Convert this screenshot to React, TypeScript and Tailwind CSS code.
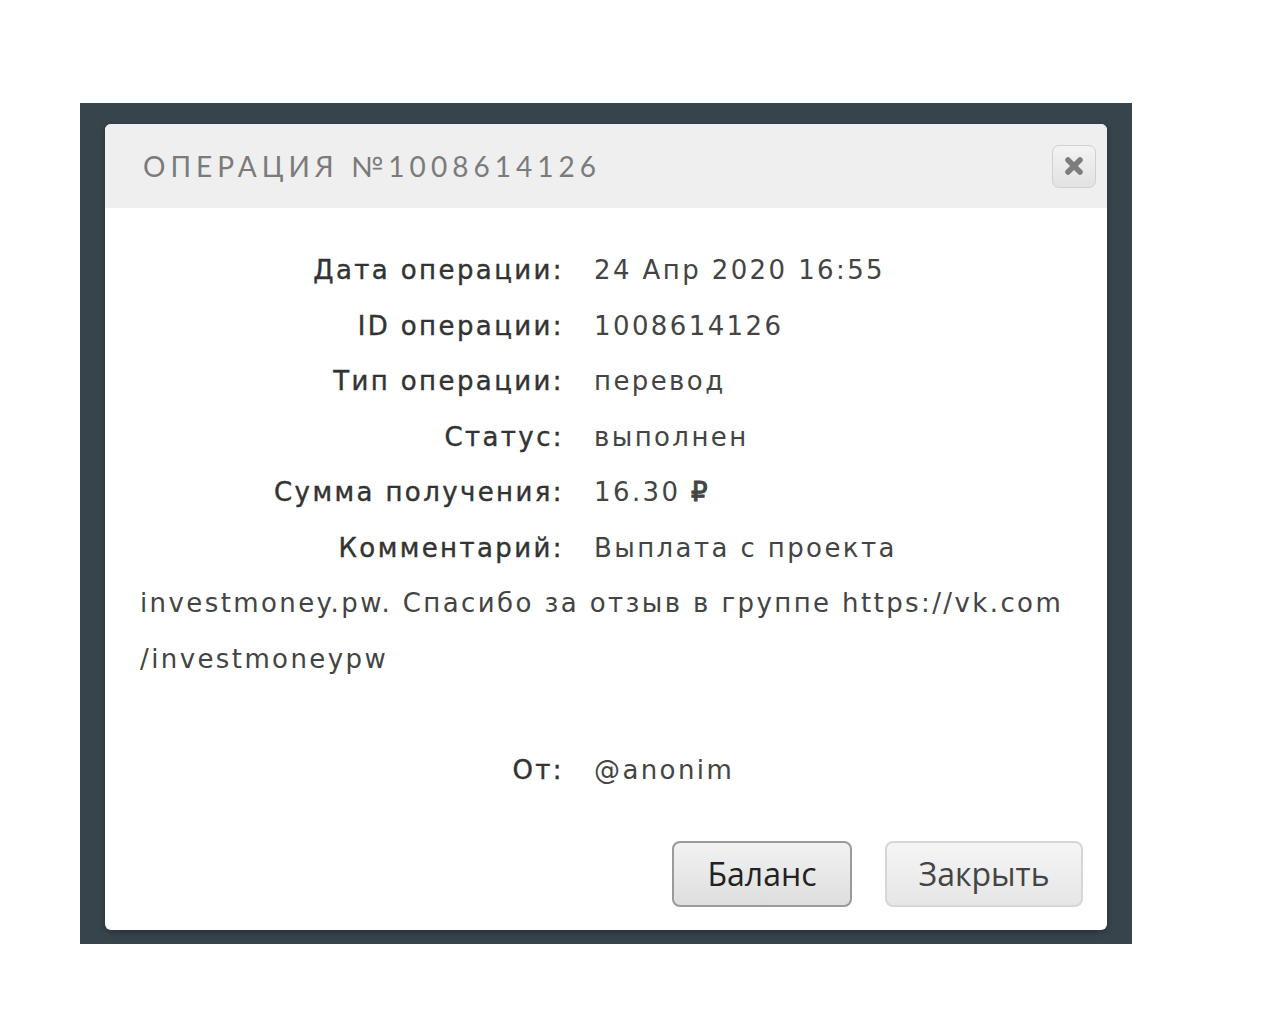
import React from "react";

const rows: [string, React.ReactNode][] = [
  ["Дата операции:", "24 Апр 2020 16:55"],
  ["ID операции:", "1008614126"],
  ["Тип операции:", "перевод"],
  ["Статус:", "выполнен"],
  ["Сумма получения:", <span>16.30 <span className="[-webkit-text-stroke:1px_#444]">₽</span></span>],
  ["Комментарий:", "Выплата с проекта"],
];

function Row({ label, value }: { label: string; value: React.ReactNode }) {
  return (
    <div className="flex h-[55.5px] items-center">
      <div className="w-[424px] shrink-0 text-right text-[#333] [-webkit-text-stroke:0.4px_#333]">{label}</div>
      <div className="pl-[30px] text-[#444]">{value}</div>
    </div>
  );
}

export default function App() {
  return (
    <div className="min-h-screen w-full bg-white pt-[103px] pl-[80px]">
      <div className="flex h-[841px] w-[1052px] flex-col bg-[#37444c] pl-[25px] pt-[21px]">
        <div className="flex h-[806px] w-[1002px] flex-col rounded-[6px] bg-white shadow-[0_2px_6px_rgba(0,0,0,0.3)]">
          <div className="flex h-[84px] items-center justify-between rounded-t-[6px] bg-[#efefef] pl-[38px] pr-[11px]">
            <div
              className="text-[28px] uppercase tracking-[0.18em] text-[#7b7b7b]"
              style={{ fontFamily: "Lato, 'Open Sans', sans-serif" }}
            >
              Операция №1008614126
            </div>
            <button className="flex h-[43px] w-[44px] items-center justify-center rounded-[7px] border border-[#d0d0d0] bg-gradient-to-b from-[#f3f3f3] to-[#e2e2e2]">
              <svg width="22" height="22" viewBox="0 0 22 22">
                <path d="M5 5 L17 17 M17 5 L5 17" stroke="#7d7d7d" strokeWidth="5.5" strokeLinecap="round" />
              </svg>
            </button>
          </div>
          <div
            className="flex flex-1 flex-col px-[35px] pt-[35px] text-[26px] tracking-[2.4px]"
            style={{ fontFamily: "'DejaVu Sans', 'Open Sans', sans-serif" }}
          >
            {rows.map(([l, v]) => (
              <Row key={l} label={l} value={v} />
            ))}
            <div className="flex h-[55.5px] items-center text-[#444]">
              investmoney.pw. Спасибо за отзыв в группе https://vk.com
            </div>
            <div className="flex h-[55.5px] items-center text-[#444]">/investmoneypw</div>
            <div className="h-[55.5px]" />
            <Row label="От:" value="@anonim" />
            <div
              className="mt-auto -mr-[11px] flex justify-end gap-[33px] pb-[23px] tracking-normal"
              style={{ fontFamily: "'Open Sans', sans-serif" }}
            >
              <button className="h-[66px] w-[180px] rounded-[8px] border-2 border-[#9a9a9a] bg-gradient-to-b from-[#f2f2f2] to-[#dedede] text-[32px] text-[#222]">
                Баланс
              </button>
              <button className="h-[66px] w-[198px] rounded-[8px] border-2 border-[#d6d6d6] bg-gradient-to-b from-[#f5f5f5] to-[#e6e6e6] text-[32px] text-[#444]">
                Закрыть
              </button>
            </div>
          </div>
        </div>
      </div>
    </div>
  );
}
